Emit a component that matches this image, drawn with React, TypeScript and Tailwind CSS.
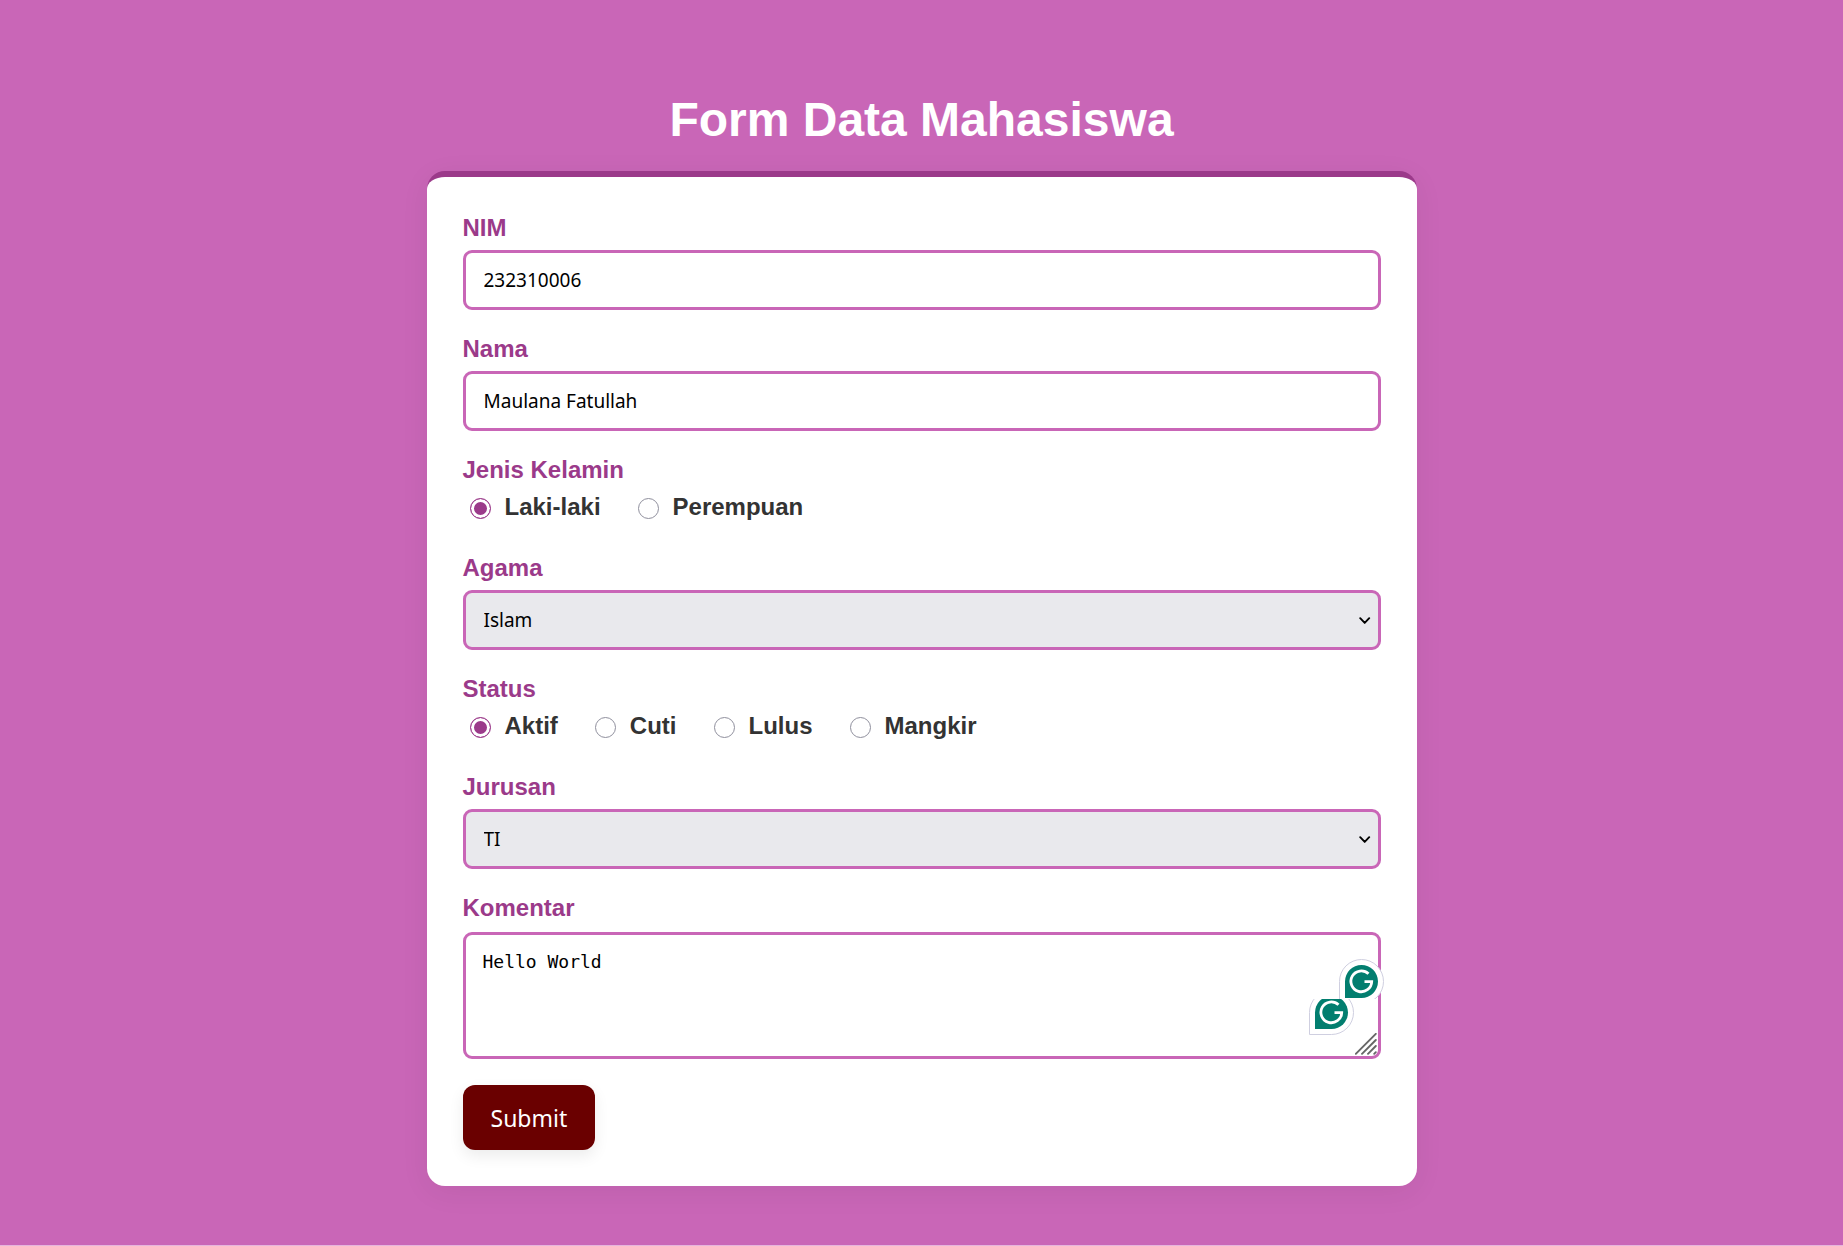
import React, { useState } from "react";

const labelClass = "block text-[24px] leading-[30px] font-bold text-[#9b3a8a]";
const fieldClass =
  "block h-[60px] w-full rounded-[9px] border-3 border-[#c966b7] px-[18px] text-[19px] leading-6 text-black outline-none font-['Noto_Sans',sans-serif]";

function TextField({ id, label, initial }: { id: string; label: string; initial: string }) {
  return (
    <div>
      <label htmlFor={id} className={labelClass}>
        {label}
      </label>
      <input id={id} name={id} type="text" defaultValue={initial} className={`${fieldClass} mt-[7px] bg-white`} />
    </div>
  );
}

function SelectField({ id, label, options }: { id: string; label: string; options: string[] }) {
  return (
    <div>
      <label htmlFor={id} className={labelClass}>
        {label}
      </label>
      <div className="relative mt-[7px]">
        <select id={id} name={id} className={`${fieldClass} appearance-none bg-[#e9e9ed]`}>
          {options.map((option) => (
            <option key={option}>{option}</option>
          ))}
        </select>
        <svg
          aria-hidden="true"
          viewBox="0 0 12 8"
          className="pointer-events-none absolute top-[27px] right-[10px] h-2 w-3"
          fill="none"
          stroke="#000"
          strokeWidth="1.9"
          strokeLinecap="round"
          strokeLinejoin="round"
        >
          <path d="M1.2 1.2 5.7 5.9 10.2 1.2" />
        </svg>
      </div>
    </div>
  );
}

function RadioGroup({ name, label, options }: { name: string; label: string; options: string[] }) {
  const [value, setValue] = useState(options[0]);
  return (
    <fieldset>
      <legend className={labelClass}>{label}</legend>
      <div className="flex flex-wrap gap-x-[37px] py-2 pl-[7px]">
        {options.map((option) => (
          <label key={option} className="flex items-center gap-[14px] text-[24px] leading-7 font-bold text-[#333]">
            <input
              type="radio"
              name={name}
              value={option}
              checked={value === option}
              onChange={() => setValue(option)}
              className="mt-[3px] size-[21px] appearance-none rounded-full border border-[#8f8f9d] bg-white checked:border-[#9b3a8a] checked:bg-[#9b3a8a] checked:shadow-[inset_0_0_0_3px_#fff]"
            />
            {option}
          </label>
        ))}
      </div>
    </fieldset>
  );
}

function AssistantBadges() {
  return (
    <svg
      aria-hidden="true"
      viewBox="0 0 84 80"
      className="pointer-events-none absolute top-6 -right-2 h-20 w-[84px]"
      fill="none"
    >
      <defs>
        <clipPath id="upper-badge">
          <rect x="30" y="0" width="54" height="43" />
        </clipPath>
        <clipPath id="lower-badge">
          <rect x="0" y="43" width="54" height="37" />
        </clipPath>
        <path id="badge-letter" d="M7 -7.7A10.4 10.4 0 1 0 10.2 0.2H3" stroke="#fff" strokeWidth="2.8" />
      </defs>
      <g clipPath="url(#lower-badge)">
        <path d="M4.5 78.5V56.5A22 22 0 1 1 26.5 78.5Z" fill="#fff" stroke="#cfcfe0" />
        <path d="M10 73V56.5A16.5 16.5 0 1 1 26.5 73Z" fill="#027e6f" />
        <use href="#badge-letter" x="26.5" y="56.5" />
      </g>
      <g clipPath="url(#upper-badge)">
        <path d="M34.5 47.5V25.5A22 22 0 1 1 56.5 47.5Z" fill="#fff" stroke="#cfcfe0" />
        <path d="M40 42V25.5A16.5 16.5 0 1 1 56.5 42Z" fill="#027e6f" />
        <use href="#badge-letter" x="56.5" y="25.5" />
      </g>
    </svg>
  );
}

function ResizeGrip() {
  return (
    <svg
      aria-hidden="true"
      viewBox="0 0 22 22"
      className="pointer-events-none absolute right-1 bottom-1 size-[22px]"
      stroke="#666"
      strokeWidth="1.9"
      strokeLinecap="round"
      fill="none"
    >
      <path d="M0.8 20.8 20.8 0.8M7 20.8 20.8 7M13 20.8 20.8 13M19.2 20.8 20.8 19.2" />
    </svg>
  );
}

export default function App() {
  return (
    <main className="flex min-h-screen flex-col items-center border-b border-[#e6b5dd] bg-[#c966b7] px-6 pt-[92px] pb-12 font-['Liberation_Sans',Arial,sans-serif]">
      <h1 className="text-center text-[48px] leading-[55px] font-bold text-white">Form Data Mahasiswa</h1>
      <form
        onSubmit={(event) => event.preventDefault()}
        className="mt-6 flex w-full max-w-[990px] flex-col gap-6 rounded-[18px] border-t-6 border-[#9b3a8a] bg-white p-9 shadow-[0_6px_30px_rgba(0,0,0,0.06)]"
      >
        <TextField id="nim" label="NIM" initial="232310006" />
        <TextField id="nama" label="Nama" initial="Maulana Fatullah" />
        <RadioGroup name="kelamin" label="Jenis Kelamin" options={["Laki-laki", "Perempuan"]} />
        <SelectField id="agama" label="Agama" options={["Islam", "Kristen", "Katolik", "Hindu", "Buddha"]} />
        <RadioGroup name="status" label="Status" options={["Aktif", "Cuti", "Lulus", "Mangkir"]} />
        <SelectField id="jurusan" label="Jurusan" options={["TI", "SI"]} />
        <div>
          <label htmlFor="komentar" className={labelClass}>
            Komentar
          </label>
          <div className="relative mt-[9px]">
            <textarea
              id="komentar"
              name="komentar"
              defaultValue="Hello World"
              spellCheck={false}
              className="block h-[127px] w-full resize-none rounded-[9px] border-3 border-[#c966b7] bg-white px-[17px] py-[15px] font-['DejaVu_Sans_Mono',monospace] text-[18px] leading-6 text-black outline-none"
            />
            <ResizeGrip />
            <AssistantBadges />
          </div>
        </div>
        <button
          type="submit"
          className="mt-[2px] h-[65px] self-start rounded-xl bg-[#6a0000] px-7 font-['Noto_Sans',sans-serif] text-[23px] leading-7 text-white shadow-[0_6px_15px_rgba(0,0,0,0.08)]"
        >
          Submit
        </button>
      </form>
    </main>
  );
}
